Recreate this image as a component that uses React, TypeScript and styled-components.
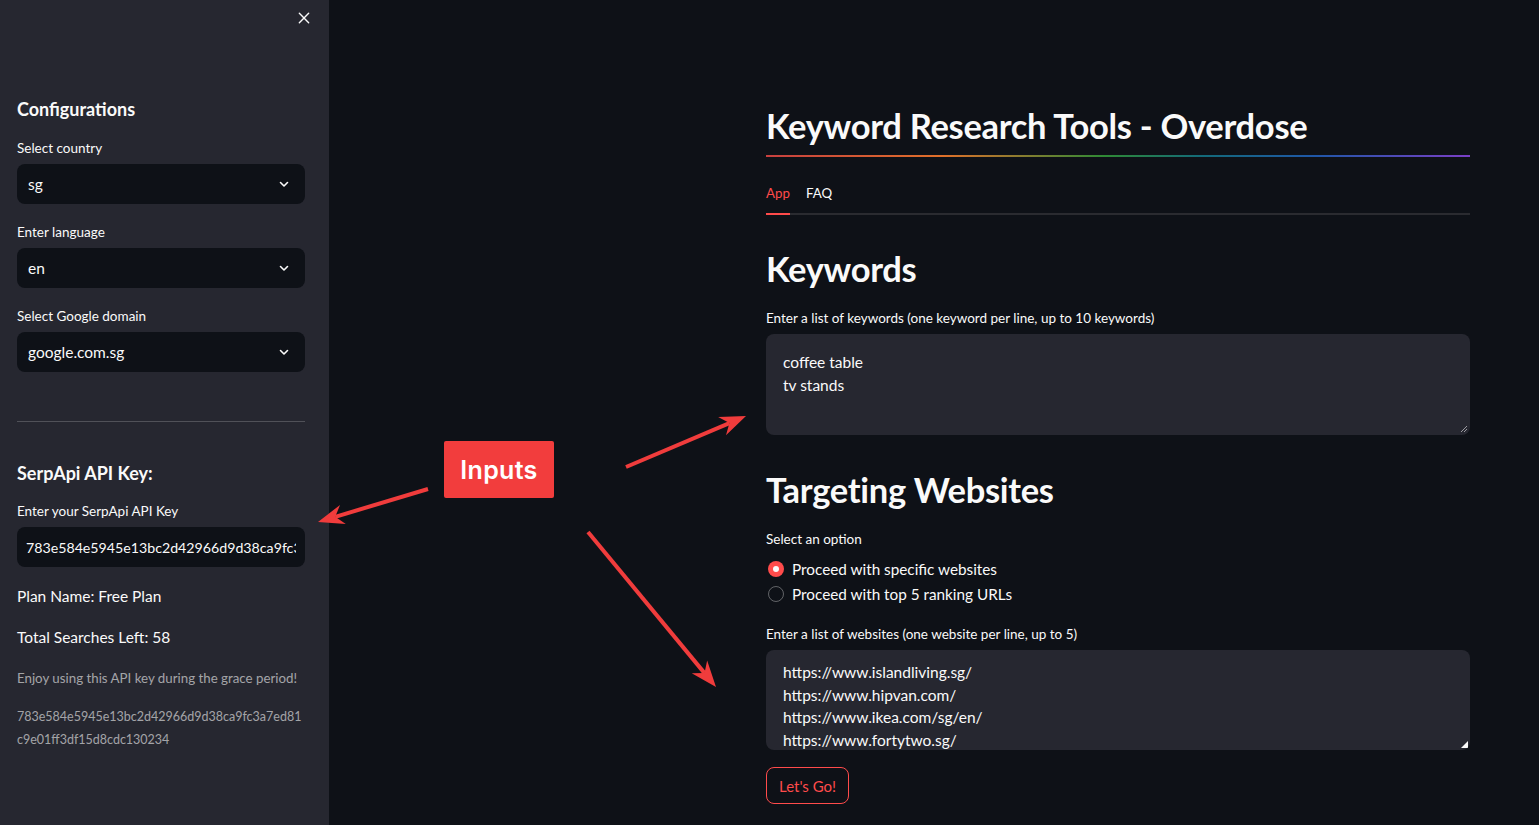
import React from "react";
import styled, { createGlobalStyle } from "styled-components";

const GlobalStyle = createGlobalStyle`
  html, body {
    margin: 0;
    padding: 0;
    background: #0e1117;
  }
  body {
    font-family: Lato, "Noto Sans", sans-serif;
    color: #fafafa;
  }
  * {
    box-sizing: border-box;
  }
`;

const Page = styled.div`
  position: relative;
  display: flex;
  width: 1539px;
  height: 825px;
  overflow: hidden;
  background: #0e1117;
`;

const Sidebar = styled.aside`
  width: 329px;
  flex-shrink: 0;
  background: #262730;
  padding: 0 24px 0 17px;
  display: flex;
  flex-direction: column;
`;

const CloseRow = styled.div`
  height: 36px;
  display: flex;
  align-items: center;
  justify-content: flex-end;
  margin-right: -6px;
`;

const SideHeading = styled.h3<{ $top: number }>`
  margin: ${(p) => p.$top}px 0 0;
  font-size: 18px;
  line-height: 28px;
  font-weight: 700;
`;

const Label = styled.div<{ $top: number }>`
  margin-top: ${(p) => p.$top}px;
  font-size: 13.5px;
  line-height: 20px;
  color: #fafafa;
`;

const SelectBox = styled.div`
  margin-top: 6px;
  height: 40px;
  border-radius: 8px;
  background: #0e1117;
  display: flex;
  align-items: center;
  justify-content: space-between;
  padding: 0 15px 0 11px;
  font-size: 15.5px;
`;

const Divider = styled.hr`
  margin: 49px 0 0;
  border: none;
  height: 1px;
  background: rgba(250, 250, 250, 0.2);
`;

const KeyInput = styled.div`
  margin-top: 6px;
  height: 40px;
  border-radius: 8px;
  background: #0e1117;
  display: flex;
  align-items: center;
  padding: 0 9px;
  font-size: 14.2px;
`;

const KeyValue = styled.span`
  white-space: nowrap;
  overflow: hidden;
  min-width: 0;
`;

const InfoText = styled.div<{ $top: number }>`
  margin-top: ${(p) => p.$top}px;
  font-size: 15.5px;
  line-height: 24px;
`;

const Muted = styled.div<{ $top: number }>`
  margin-top: ${(p) => p.$top}px;
  font-size: 13.3px;
  line-height: 20px;
  color: rgba(250, 250, 250, 0.6);
`;

const KeyText = styled.div`
  margin-top: 17px;
  font-size: 12.5px;
  line-height: 23px;
  color: rgba(250, 250, 250, 0.6);
  word-break: break-all;
`;

const Main = styled.main`
  flex: 1;
  padding-left: 437px;
`;

const Content = styled.div`
  width: 704px;
  display: flex;
  flex-direction: column;
`;

const Title = styled.h1`
  margin: 102px 0 0;
  font-size: 34.5px;
  line-height: 48px;
  font-weight: 700;
  letter-spacing: -0.3px;
`;

const Rainbow = styled.div`
  margin-top: 5px;
  height: 2px;
  background: linear-gradient(
    to right,
    #c8403f,
    #e0702a 25%,
    #2f8a35 48%,
    #136a7a 62%,
    #1f57a8 78%,
    #7a3fc6
  );
`;

const TabBar = styled.div`
  margin-top: 20px;
  display: flex;
  gap: 16px;
  border-bottom: 2px solid #2a2b30;
`;

const Tab = styled.div<{ $active?: boolean }>`
  height: 38px;
  display: flex;
  align-items: center;
  padding-bottom: 4px;
  margin-bottom: -2px;
  font-size: 13.3px;
  color: ${(p) => (p.$active ? "#ff4b4b" : "#fafafa")};
  border-bottom: 2px solid ${(p) => (p.$active ? "#ff4b4b" : "transparent")};
`;

const SectionTitle = styled.h2<{ $top: number }>`
  margin: ${(p) => p.$top}px 0 0;
  font-size: 34.5px;
  line-height: 46px;
  font-weight: 700;
  letter-spacing: -0.3px;
`;

const TextArea = styled.div<{ $height: number; $padTop: number; $lh: number }>`
  position: relative;
  margin-top: 6px;
  height: ${(p) => p.$height}px;
  border-radius: 8px;
  background: #262730;
  padding: ${(p) => p.$padTop}px 17px 0;
  font-size: 15.5px;
  line-height: ${(p) => p.$lh}px;
  overflow: hidden;
`;

const Grip = styled.svg`
  position: absolute;
  right: 2px;
  bottom: 2px;
`;

const RadioGroup = styled.div`
  margin-top: 7px;
  display: flex;
  flex-direction: column;
`;

const RadioRow = styled.div`
  display: flex;
  align-items: center;
  gap: 8px;
  height: 25px;
  font-size: 15.3px;
`;

const RadioDot = styled.span<{ $checked?: boolean }>`
  width: 16px;
  height: 16px;
  margin-left: 2px;
  border-radius: 50%;
  flex-shrink: 0;
  background: ${(p) => (p.$checked ? "#ff4b4b" : "transparent")};
  border: ${(p) => (p.$checked ? "none" : "1px solid rgba(250,250,250,0.35)")};
  display: flex;
  align-items: center;
  justify-content: center;
  &::after {
    content: "";
    width: 6px;
    height: 6px;
    border-radius: 50%;
    background: ${(p) => (p.$checked ? "#fafafa" : "transparent")};
  }
`;

const GoButton = styled.button`
  margin-top: 17px;
  align-self: flex-start;
  height: 37px;
  padding: 0 12px;
  border-radius: 8px;
  border: 1px solid #ff4b4b;
  background: transparent;
  color: #ff4b4b;
  font-family: inherit;
  font-size: 15px;
  white-space: nowrap;
`;

const Callout = styled.div`
  position: absolute;
  left: 444px;
  top: 441px;
  width: 110px;
  height: 57px;
  background: #f23d3d;
  border-radius: 2px;
  display: flex;
  align-items: center;
  justify-content: center;
  font-family: Inter, "Noto Sans", sans-serif;
  font-weight: 600;
  font-size: 25px;
  color: #ffffff;
  letter-spacing: 0.3px;
`;

const Overlay = styled.svg`
  position: absolute;
  left: 0;
  top: 0;
  pointer-events: none;
`;

const Chevron = () => (
  <svg width="12" height="12" viewBox="0 0 24 24" fill="none" stroke="#fafafa" strokeWidth="3.2" strokeLinecap="round" strokeLinejoin="round">
    <path d="M5 9l7 7 7-7" />
  </svg>
);

const CloseIcon = () => (
  <svg width="14" height="14" viewBox="0 0 24 24" fill="none" stroke="#fafafa" strokeWidth="2.4" strokeLinecap="round">
    <path d="M4 4l16 16M20 4L4 20" />
  </svg>
);

type Pt = [number, number];

const Arrow = ({ from, to }: { from: Pt; to: Pt }) => {
  const dx = to[0] - from[0];
  const dy = to[1] - from[1];
  const len = Math.hypot(dx, dy);
  const ux = dx / len;
  const uy = dy / len;
  const px = -uy;
  const py = ux;
  const headLen = 26;
  const headW = 10;
  const notch = 18;
  const base: Pt = [to[0] - ux * headLen, to[1] - uy * headLen];
  const inner: Pt = [to[0] - ux * notch, to[1] - uy * notch];
  const pts = [
    to,
    [base[0] + px * headW, base[1] + py * headW],
    inner,
    [base[0] - px * headW, base[1] - py * headW],
  ]
    .map((p) => p.join(","))
    .join(" ");
  return (
    <g>
      <line x1={from[0]} y1={from[1]} x2={inner[0]} y2={inner[1]} stroke="#f03c3c" strokeWidth="4" />
      <polygon points={pts} fill="#f03c3c" />
    </g>
  );
};

const selects = [
  { label: "Select country", value: "sg", top: 15 },
  { label: "Enter language", value: "en", top: 18 },
  { label: "Select Google domain", value: "google.com.sg", top: 18 },
];

const websites = [
  "https://www.islandliving.sg/",
  "https://www.hipvan.com/",
  "https://www.ikea.com/sg/en/",
  "https://www.fortytwo.sg/",
];

export default function App() {
  return (
    <Page>
      <GlobalStyle />
      <Sidebar>
        <CloseRow>
          <CloseIcon />
        </CloseRow>
        <SideHeading $top={59}>Configurations</SideHeading>
        {selects.map((s) => (
          <React.Fragment key={s.label}>
            <Label $top={s.top}>{s.label}</Label>
            <SelectBox>
              <span>{s.value}</span>
              <Chevron />
            </SelectBox>
          </React.Fragment>
        ))}
        <Divider />
        <SideHeading $top={37}>SerpApi API Key:</SideHeading>
        <Label $top={14}>Enter your SerpApi API Key</Label>
        <KeyInput>
          <KeyValue>783e584e5945e13bc2d42966d9d38ca9fc3a7ed81c9e01ff3df15d8cdc130234</KeyValue>
        </KeyInput>
        <InfoText $top={17}>Plan Name: Free Plan</InfoText>
        <InfoText $top={17}>Total Searches Left: 58</InfoText>
        <Muted $top={19}>Enjoy using this API key during the grace period!</Muted>
        <KeyText>783e584e5945e13bc2d42966d9d38ca9fc3a7ed81c9e01ff3df15d8cdc130234</KeyText>
      </Sidebar>

      <Main>
        <Content>
          <Title>Keyword Research Tools - Overdose</Title>
          <Rainbow />
          <TabBar>
            <Tab $active>App</Tab>
            <Tab>FAQ</Tab>
          </TabBar>

          <SectionTitle $top={31}>Keywords</SectionTitle>
          <Label $top={16}>Enter a list of keywords (one keyword per line, up to 10 keywords)</Label>
          <TextArea $height={101} $padTop={17} $lh={23}>
            <div>coffee table</div>
            <div>tv stands</div>
            <Grip width="8" height="8" viewBox="0 0 8 8">
              <path d="M7 1L1 7M7 4L4 7" stroke="#9a9aa0" strokeWidth="1" />
            </Grip>
          </TextArea>

          <SectionTitle $top={32}>Targeting Websites</SectionTitle>
          <Label $top={16}>Select an option</Label>
          <RadioGroup>
            <RadioRow>
              <RadioDot $checked />
              Proceed with specific websites
            </RadioRow>
            <RadioRow>
              <RadioDot />
              Proceed with top 5 ranking URLs
            </RadioRow>
          </RadioGroup>
          <Label $top={18}>Enter a list of websites (one website per line, up to 5)</Label>
          <TextArea $height={100} $padTop={11} $lh={22.5}>
            {websites.map((w) => (
              <div key={w}>{w}</div>
            ))}
            <Grip width="7" height="7" viewBox="0 0 7 7">
              <path d="M7 0V7H0Z" fill="#fafafa" />
            </Grip>
          </TextArea>
          <GoButton>Let's Go!</GoButton>
        </Content>
      </Main>

      <Overlay width="1539" height="825">
        <Arrow from={[428, 489]} to={[318, 522]} />
        <Arrow from={[626, 467]} to={[746, 416]} />
        <Arrow from={[588, 532]} to={[716, 687]} />
      </Overlay>
      <Callout>Inputs</Callout>
    </Page>
  );
}
